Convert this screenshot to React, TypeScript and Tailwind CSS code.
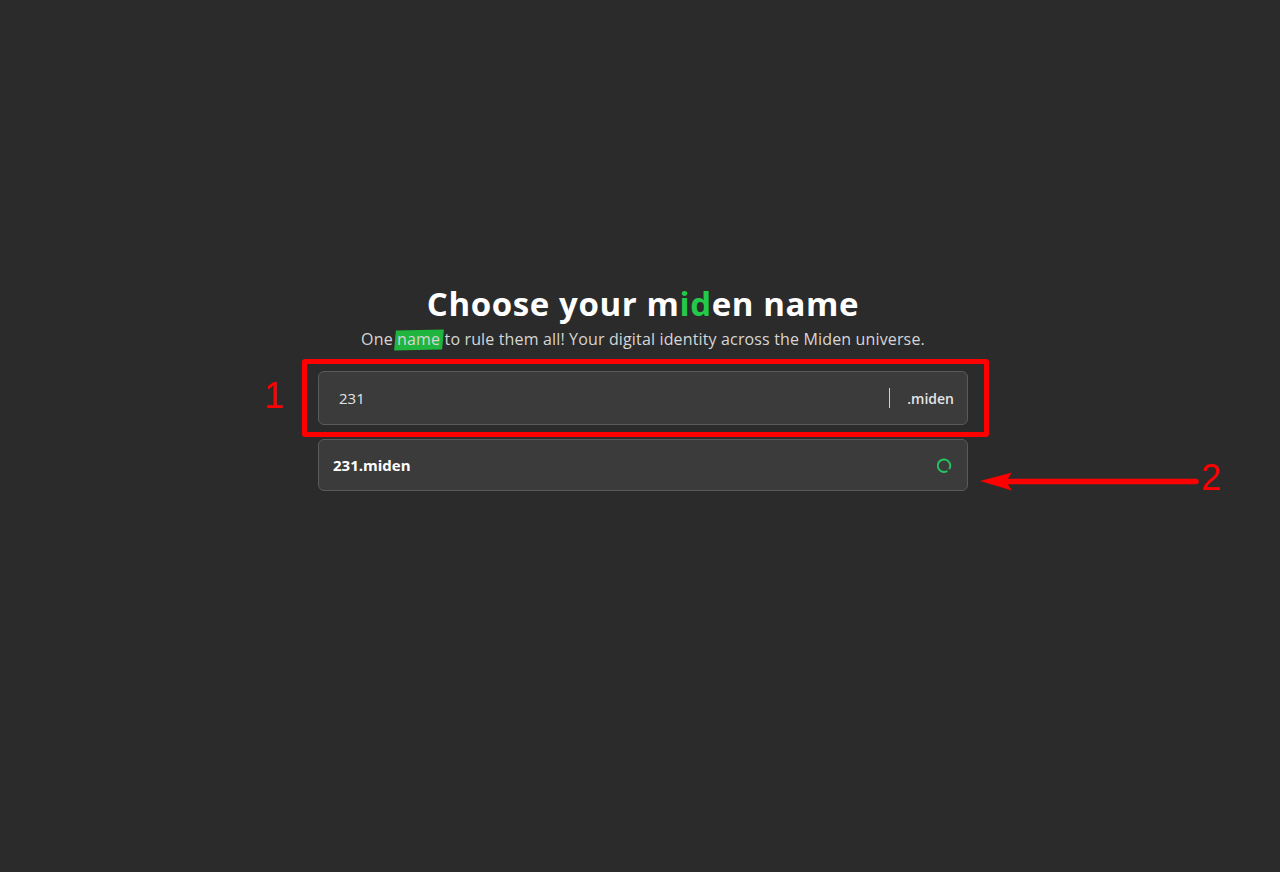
import React from "react";

function Spinner() {
  return (
    <svg width="15" height="15" viewBox="0 0 15 15" className="shrink-0">
      <path
        d="M12.6 10.3 A6.2 6.2 0 1 0 9.6 13.3"
        fill="none"
        stroke="#22c55e"
        strokeWidth="1.9"
        strokeLinecap="round"
      />
    </svg>
  );
}

export default function App() {
  return (
    <div
      className="relative h-[872px] w-full bg-[#2b2b2b] overflow-hidden"
      style={{ fontFamily: '"Open Sans", "Noto Sans", sans-serif' }}
    >
      <div className="flex justify-center pl-[6px] pt-[284px]">
        <div className="flex flex-col items-center w-[650px]">
          <h1 className="text-[33px] leading-[40px] font-bold text-white whitespace-nowrap tracking-[0.6px]">
            Choose your m<span className="text-[#22c94a]">id</span>en name
          </h1>
          <p className="mt-[5px] text-[16px] leading-[20px] text-[#d6d6d6] whitespace-nowrap tracking-[0.15px]">
            One{" "}
            <span className="relative inline-block">
              <span className="absolute -left-[2px] -right-[3px] top-[1px] bottom-[-1px] bg-[#1fb53f] -skew-x-6 -rotate-1" />
              <span className="relative">name</span>
            </span>{" "}
            to rule them all! Your digital identity across the Miden universe.
          </p>

          <div className="relative mt-[22px] w-full">
            <div className="flex items-center h-[54px] w-full rounded-md border border-[#5a5a5a] bg-[#3b3b3b] pl-[20px] pr-[13px]">
              <span className="flex-1 text-[15px] text-[#e4e4e4]">231</span>
              <span className="h-[20px] w-px bg-[#d0d0d0]" />
              <span className="ml-[17px] text-[14px] font-semibold text-[#e4e4e4]">.miden</span>
            </div>
            <div className="pointer-events-none absolute -left-[16px] -right-[21px] -top-[12px] -bottom-[12px] border-[5px] border-[#ff0000] rounded-[3px]" />
          </div>

          <div className="mt-[14px] flex items-center h-[52px] w-full rounded-md border border-[#5a5a5a] bg-[#3b3b3b] pl-[14px] pr-[15px]">
            <span className="flex-1 text-[15px] font-bold text-white">231.miden</span>
            <Spinner />
          </div>
        </div>
      </div>

      <span
        className="absolute left-[264px] top-[374px] text-[36px] leading-[44px] text-[#ff0000]"
        style={{ fontFamily: '"Liberation Sans", sans-serif' }}
      >
        1
      </span>

      <svg className="absolute left-[978px] top-[470px]" width="224" height="24" viewBox="0 0 224 24">
        <path d="M2 11 L34 2.5 L28 11.5 L34 20.5 Z" fill="#ff0000" />
        <path d="M28 11.5 L218 11.5" stroke="#ff0000" strokeWidth="5.5" strokeLinecap="round" />
      </svg>

      <span
        className="absolute left-[1201px] top-[456px] text-[36px] leading-[44px] text-[#ff0000]"
        style={{ fontFamily: '"Liberation Sans", sans-serif' }}
      >
        2
      </span>
    </div>
  );
}
